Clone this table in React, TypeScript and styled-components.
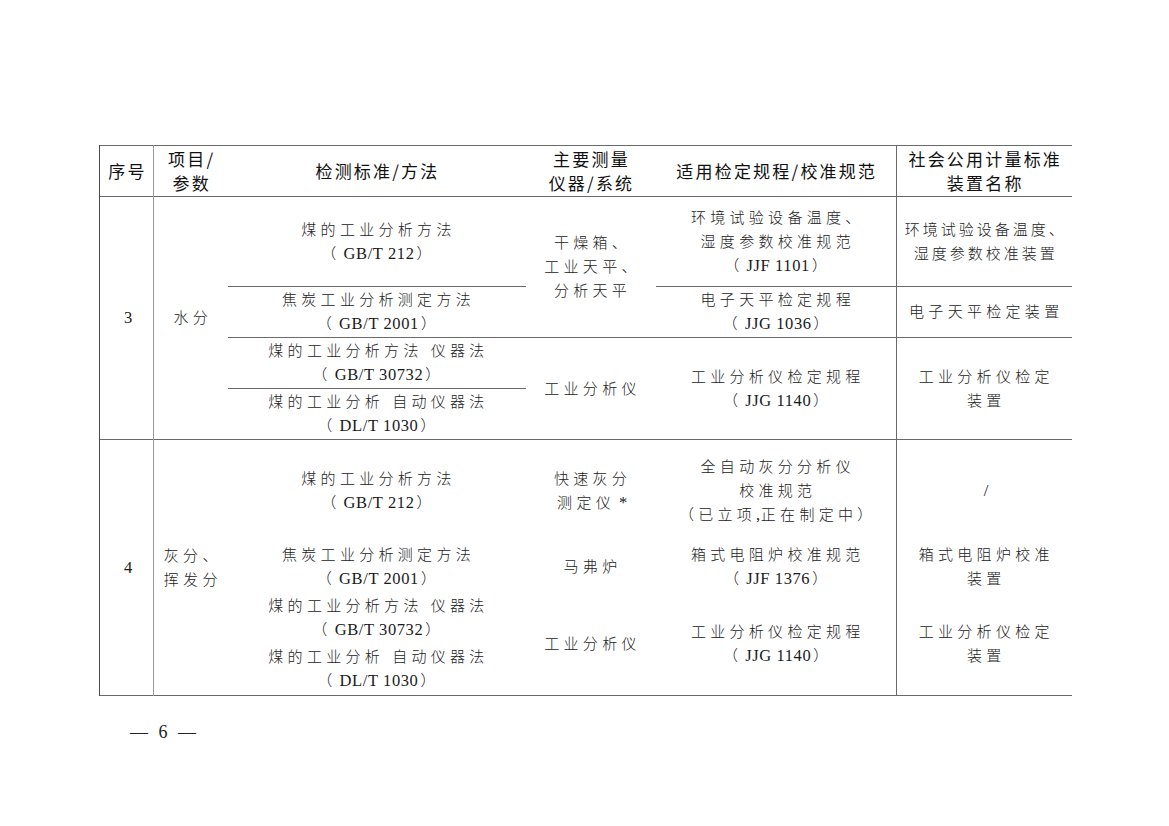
import styled, { createGlobalStyle } from "styled-components";

const GlobalStyle = createGlobalStyle`
  html, body {
    margin: 0;
    background: #fff;
  }
  body {
    font-family: "Noto Sans CJK SC", sans-serif;
    color: #1a1a1a;
  }
`;

const Page = styled.div`
  width: 1169px;
  height: 826px;
  box-sizing: border-box;
  padding: 145px 0 0 99px;
`;

const Sheet = styled.table`
  width: 972px;
  table-layout: fixed;
  border-collapse: collapse;
`;

const Col = styled.col<{ $w: number }>`
  width: ${({ $w }) => $w}px;
`;

const Head = styled.thead`
  border-top: 1px solid #6a6a6a;
  border-bottom: 1px solid #6a6a6a;
`;

const Group = styled.tbody`
  border-bottom: 1px solid #6a6a6a;
`;

const Row = styled.tr<{ $h: number }>`
  height: ${({ $h }) => $h}px;
`;

type EdgeProps = {
  $edge?: boolean;
  $split?: boolean;
  $divide?: boolean;
  $rule?: boolean;
};

const HeadCell = styled.th<EdgeProps>`
  padding: 0 0 0 2px;
  font-family: "Noto Sans CJK SC", sans-serif;
  font-size: 17px;
  font-weight: 400;
  letter-spacing: 2.2px;
  line-height: 24px;
  color: #111;
  text-align: center;
  vertical-align: middle;
  border-left: ${({ $edge }) => ($edge ? "1px solid #4a4a4a" : "none")};
  border-right: ${({ $split, $divide }) =>
    $split ? "1px solid #9a9a9a" : $divide ? "1px solid #6a6a6a" : "none"};
`;

const Cell = styled.td<EdgeProps & { $tight?: boolean }>`
  padding: 0 0 0 ${({ $tight }) => ($tight ? 3 : 4)}px;
  font-family: "Liberation Serif", "Noto Sans CJK SC", serif;
  font-size: 15px;
  font-weight: 300;
  letter-spacing: ${({ $tight }) => ($tight ? 3 : 4.3)}px;
  line-height: 24px;
  color: #222;
  text-align: center;
  vertical-align: middle;
  border-left: ${({ $edge }) => ($edge ? "1px solid #4a4a4a" : "none")};
  border-right: ${({ $split, $divide }) =>
    $split ? "1px solid #9a9a9a" : $divide ? "1px solid #6a6a6a" : "none"};
  border-bottom: ${({ $rule }) => ($rule ? "1px solid #6a6a6a" : "none")};
`;

const Line = styled.div`
  white-space: nowrap;
`;

const Latin = styled.span`
  font-family: "Liberation Serif", serif;
  font-size: 16.5px;
  font-weight: 400;
  letter-spacing: 0.6px;
  color: #1a1a1a;
`;

// the code inside full-width brackets, e.g. GB/T 212
const Code = styled(Latin)`
  padding: 0 2px 0 3px;
`;

const Mark = styled(Latin)`
  margin-left: 4px;
`;

const Footer = styled.div`
  margin: 24px 0 0 31px;
  font-family: "Liberation Serif", serif;
  font-size: 18px;
  line-height: 24px;
  word-spacing: 6px;
  color: #222;
`;

const Ref = ({ code }: { code: string }) => (
  <Line>
    （<Code>{code}</Code>）
  </Line>
);

const Text = ({ lines }: { lines: Array<string> }) => (
  <>
    {lines.map((line) => (
      <Line key={line}>{line}</Line>
    ))}
  </>
);

export default function App() {
  return (
    <Page>
      <GlobalStyle />
      <Sheet>
        <colgroup>
          <Col $w={54} />
          <Col $w={74} />
          <Col $w={298} />
          <Col $w={130} />
          <Col $w={241} />
          <Col $w={175} />
        </colgroup>
        <Head>
          <Row $h={51}>
            <HeadCell $edge $split>
              序号
            </HeadCell>
            <HeadCell>
              <Text lines={["项目/", "参数"]} />
            </HeadCell>
            <HeadCell>检测标准/方法</HeadCell>
            <HeadCell>
              <Text lines={["主要测量", "仪器/系统"]} />
            </HeadCell>
            <HeadCell $divide>适用检定规程/校准规范</HeadCell>
            <HeadCell>
              <Text lines={["社会公用计量标准", "装置名称"]} />
            </HeadCell>
          </Row>
        </Head>

        <Group>
          <Row $h={90}>
            <Cell $edge $split rowSpan={4}>
              <Latin>3</Latin>
            </Cell>
            <Cell rowSpan={4}>水分</Cell>
            <Cell $rule>
              <Line>煤的工业分析方法</Line>
              <Ref code="GB/T 212" />
            </Cell>
            <Cell $rule rowSpan={2}>
              <Text lines={["干燥箱、", "工业天平、", "分析天平"]} />
            </Cell>
            <Cell $rule $divide>
              <Text lines={["环境试验设备温度、", "湿度参数校准规范"]} />
              <Ref code="JJF 1101" />
            </Cell>
            <Cell $rule $tight>
              <Text lines={["环境试验设备温度、", "湿度参数校准装置"]} />
            </Cell>
          </Row>
          <Row $h={51}>
            <Cell $rule>
              <Line>焦炭工业分析测定方法</Line>
              <Ref code="GB/T 2001" />
            </Cell>
            <Cell $rule $divide>
              <Line>电子天平检定规程</Line>
              <Ref code="JJG 1036" />
            </Cell>
            <Cell $rule>电子天平检定装置</Cell>
          </Row>
          <Row $h={51}>
            <Cell $rule>
              <Line>煤的工业分析方法 仪器法</Line>
              <Ref code="GB/T 30732" />
            </Cell>
            <Cell rowSpan={2}>工业分析仪</Cell>
            <Cell $divide rowSpan={2}>
              <Line>工业分析仪检定规程</Line>
              <Ref code="JJG 1140" />
            </Cell>
            <Cell rowSpan={2}>
              <Text lines={["工业分析仪检定", "装置"]} />
            </Cell>
          </Row>
          <Row $h={51}>
            <Cell>
              <Line>煤的工业分析 自动仪器法</Line>
              <Ref code="DL/T 1030" />
            </Cell>
          </Row>
        </Group>

        <Group>
          <Row $h={102}>
            <Cell $edge $split rowSpan={4}>
              <Latin>4</Latin>
            </Cell>
            <Cell rowSpan={4}>
              <Text lines={["灰分、", "挥发分"]} />
            </Cell>
            <Cell>
              <Line>煤的工业分析方法</Line>
              <Ref code="GB/T 212" />
            </Cell>
            <Cell>
              <Line>快速灰分</Line>
              <Line>
                测定仪<Mark>*</Mark>
              </Line>
            </Cell>
            <Cell $divide>
              <Text lines={["全自动灰分分析仪", "校准规范"]} />
              <Line>
                （已立项<Latin>,</Latin>正在制定中）
              </Line>
            </Cell>
            <Cell>
              <Latin>/</Latin>
            </Cell>
          </Row>
          <Row $h={51}>
            <Cell>
              <Line>焦炭工业分析测定方法</Line>
              <Ref code="GB/T 2001" />
            </Cell>
            <Cell>马弗炉</Cell>
            <Cell $divide>
              <Line>箱式电阻炉校准规范</Line>
              <Ref code="JJF 1376" />
            </Cell>
            <Cell>
              <Text lines={["箱式电阻炉校准", "装置"]} />
            </Cell>
          </Row>
          <Row $h={51}>
            <Cell>
              <Line>煤的工业分析方法 仪器法</Line>
              <Ref code="GB/T 30732" />
            </Cell>
            <Cell rowSpan={2}>工业分析仪</Cell>
            <Cell $divide rowSpan={2}>
              <Line>工业分析仪检定规程</Line>
              <Ref code="JJG 1140" />
            </Cell>
            <Cell rowSpan={2}>
              <Text lines={["工业分析仪检定", "装置"]} />
            </Cell>
          </Row>
          <Row $h={52}>
            <Cell>
              <Line>煤的工业分析 自动仪器法</Line>
              <Ref code="DL/T 1030" />
            </Cell>
          </Row>
        </Group>
      </Sheet>
      <Footer>— 6 —</Footer>
    </Page>
  );
}
